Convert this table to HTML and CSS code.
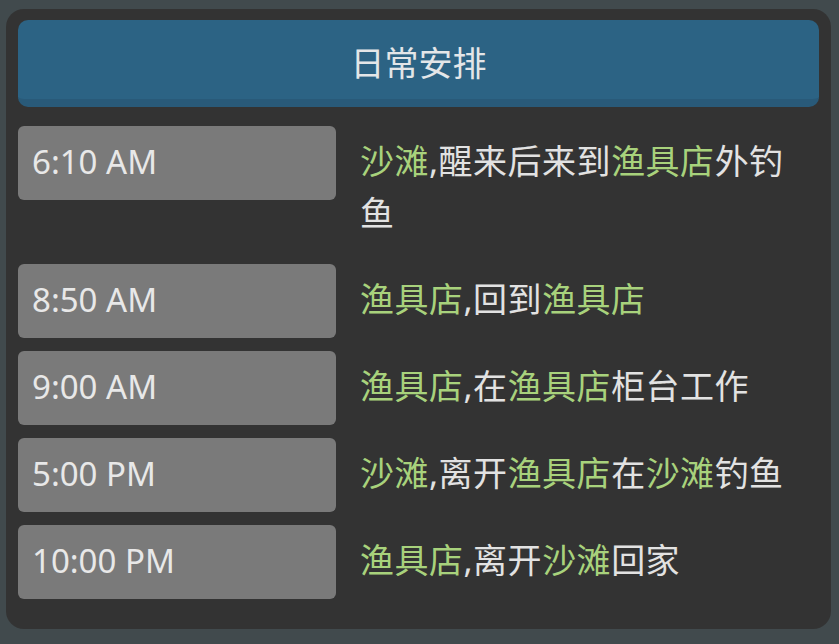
FILE: index.html
```html
<!DOCTYPE html>
<html lang="zh-CN">
<head>
<meta charset="utf-8">
<title>日常安排</title>
<link rel="stylesheet" href="styles.css">
</head>
<body>
<div class="card">
  <div class="header">日常安排</div>
  <div class="rows">
    <div class="row">
      <div class="time">6:10 AM</div>
      <div class="desc"><span class="loc">沙滩</span>,醒来后来到<span class="loc">渔具店</span>外钓鱼</div>
    </div>
    <div class="row">
      <div class="time">8:50 AM</div>
      <div class="desc"><span class="loc">渔具店</span>,回到<span class="loc">渔具店</span></div>
    </div>
    <div class="row">
      <div class="time">9:00 AM</div>
      <div class="desc"><span class="loc">渔具店</span>,在<span class="loc">渔具店</span>柜台工作</div>
    </div>
    <div class="row">
      <div class="time">5:00 PM</div>
      <div class="desc"><span class="loc">沙滩</span>,离开<span class="loc">渔具店</span>在<span class="loc">沙滩</span>钓鱼</div>
    </div>
    <div class="row">
      <div class="time">10:00 PM</div>
      <div class="desc"><span class="loc">渔具店</span>,离开<span class="loc">沙滩</span>回家</div>
    </div>
  </div>
</div>
</body>
</html>
```

FILE: styles.css
```css
html, body {
  margin: 0;
  padding: 0;
  background: #414a4d;
}
body {
  padding: 9px 8px 15px 6px;
  font-family: "Noto Sans", "Noto Sans CJK SC", sans-serif;
}
.card {
  background: #333333;
  border-radius: 18px;
  padding: 11px 12px 30px 12px;
}
.header {
  background: #2c6384;
  border-bottom: 8px solid #295a79;
  border-radius: 10px;
  height: 87px;
  display: flex;
  align-items: center;
  justify-content: center;
  color: #e3e6e8;
  font-size: 34px;
  padding-top: 4px;
  box-sizing: border-box;
}
.rows {
  margin-top: 19px;
  display: flex;
  flex-direction: column;
  gap: 13px;
}
.row {
  display: grid;
  grid-template-columns: 318px 1fr;
  column-gap: 24px;
  align-items: start;
}
.time {
  height: 74px;
  background: #7a7a7a;
  border-radius: 6px;
  color: #e8e8e8;
  font-size: 33px;
  display: flex;
  align-items: center;
  padding-left: 14px;
  padding-bottom: 4px;
  box-sizing: border-box;
}
.desc {
  color: #e2e2e2;
  font-size: 34px;
  line-height: 52px;
  letter-spacing: 0.5px;
  padding: 9px 14px 12px 0;
}
.loc {
  color: #a8d27c;
}
```
